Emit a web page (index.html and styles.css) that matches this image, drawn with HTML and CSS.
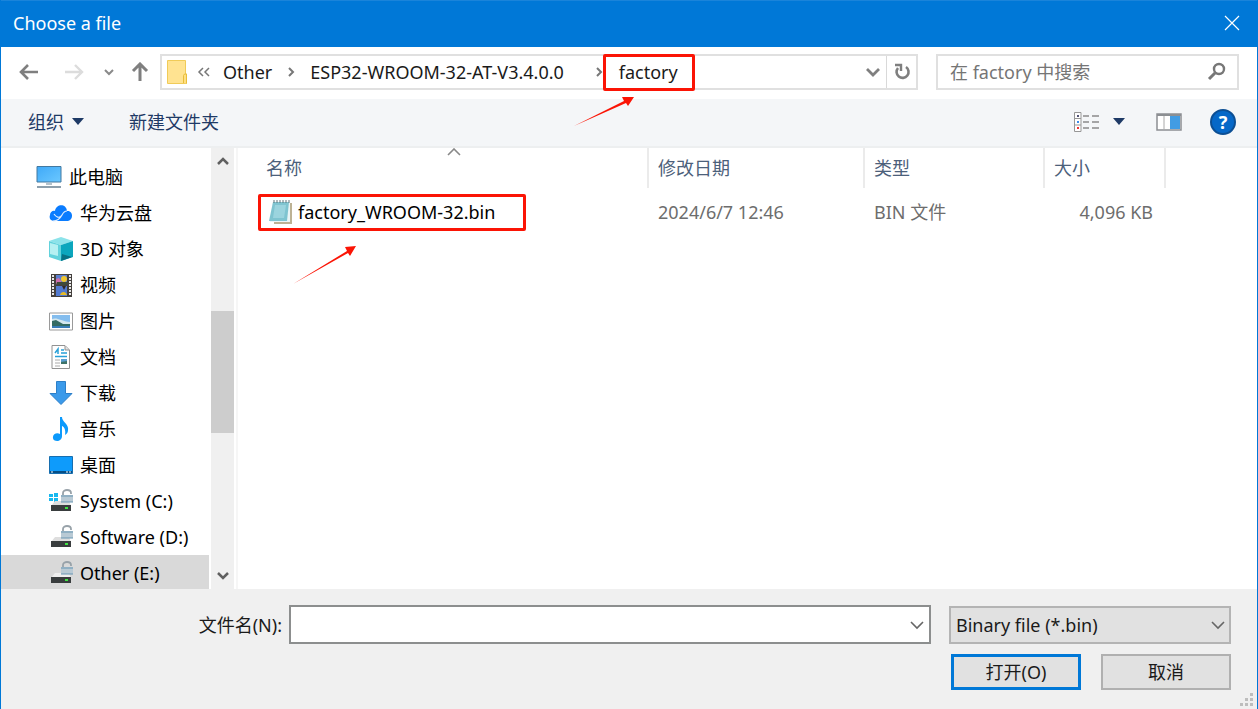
FILE: index.html
```html
<!DOCTYPE html>
<html lang="zh-CN">
<head>
    <meta charset="UTF-8">
    <meta name="viewport" content="width=device-width, initial-scale=1.0">
    <title>Choose a file</title>
    <link rel="stylesheet" href="styles.css">
</head>
<body>
    <div class="dialog">
        <header class="titlebar">
            <h1>Choose a file</h1>
            <button class="close" aria-label="Close">
                <svg width="16" height="16" viewBox="0 0 16 16"><path d="M1 1L15 15M15 1L1 15" stroke="#fff" stroke-width="1.2"/></svg>
            </button>
        </header>

        <nav class="navbar">
            <div class="history">
                <button aria-label="Back"><svg width="20" height="18" viewBox="0 0 20 18"><path d="M9 2L2 9L9 16M2 9H19" fill="none" stroke="#7f7f7f" stroke-width="2.600"/></svg></button>
                <button aria-label="Forward"><svg width="20" height="18" viewBox="0 0 20 18"><path d="M11 2L18 9L11 16M18 9H1" fill="none" stroke="#dcdcdc" stroke-width="2.400"/></svg></button>
                <button class="recent" aria-label="Recent"><svg width="10" height="8" viewBox="0 0 10 8"><path d="M1 2L5 6L9 2" fill="none" stroke="#8a8a8a" stroke-width="2"/></svg></button>
                <button aria-label="Up"><svg width="18" height="20" viewBox="0 0 18 20"><path d="M2 9L9 2L16 9M9 2V19" fill="none" stroke="#7f7f7f" stroke-width="3"/></svg></button>
            </div>
            <div class="address">
                <svg class="folder" width="20" height="26" viewBox="0 0 20 26"><path d="M.5 1.5H18.500V15H19.500V24.500H.5Z" fill="#ffe391" stroke="#f0cb58"/><path d="M16.500 24V16.500L17.500 15H19.500V24.500" fill="#ffdf80" stroke="#e8bd3a"/></svg>
                <svg class="more" width="14" height="12" viewBox="0 0 14 12"><path d="M6 2L2 6L6 10M12 2L8 6L12 10" fill="none" stroke="#777" stroke-width="1.500"/></svg>
                <a href="#">Other</a>
                <svg class="sep" width="8" height="12" viewBox="0 0 8 12"><path d="M2 2L6 6L2 10" fill="none" stroke="#777" stroke-width="2"/></svg>
                <a href="#">ESP32-WROOM-32-AT-V3.4.0.0</a>
                <svg class="sep last" width="8" height="12" viewBox="0 0 8 12"><path d="M2 2L6 6L2 10" fill="none" stroke="#777" stroke-width="2"/></svg>
                <span class="marked crumb">
                    <a href="#">factory</a>
                    <svg class="pointer" width="62" height="32" viewBox="0 0 62 32"><path d="M1 31L51 6L49 2L61 2L55 11L53 8Z" fill="#fb1405"/></svg>
                </span>
                <button class="drop" aria-label="Previous locations"><svg width="14" height="10" viewBox="0 0 14 10"><path d="M1 2L7 8L13 2" fill="none" stroke="#7f7f7f" stroke-width="2.800"/></svg></button>
                <button class="refresh" aria-label="Refresh"><svg width="18" height="20" viewBox="0 0 18 20"><path d="M13 5A6 6 0 1 1 5 6" fill="none" stroke="#7f7f7f" stroke-width="2.600"/><path d="M2 3H8V9" fill="none" stroke="#7f7f7f" stroke-width="2.400"/></svg></button>
            </div>
            <label class="search">
                <input type="search" placeholder="在 factory 中搜索" aria-label="在 factory 中搜索">
                <svg width="20" height="20" viewBox="0 0 20 20"><circle cx="12" cy="7" r="5" fill="none" stroke="#777" stroke-width="2.400"/><path d="M8 11L2 17" stroke="#777" stroke-width="3"/></svg>
            </label>
        </nav>

        <div class="toolbar">
            <button class="organize">组织 <svg width="12" height="7" viewBox="0 0 12 7"><path d="M0 0H12L6 7Z" fill="#1e3a66"/></svg></button>
            <button>新建文件夹</button>
            <div class="views">
                <button class="view" aria-label="View">
                    <svg width="26" height="20" viewBox="0 0 26 20">
                        <path d="M.5 .5H7V19.500H.5ZM.5 6.500H7M.5 13H7" fill="#fff" stroke="#979797"/>
                        <path d="M3 3H5V5H3Z" fill="#557"/><path d="M3 9H5V11H3Z" fill="#3b8bea"/><path d="M3 15H5V17H3Z" fill="#e33"/>
                        <path d="M9 4H15M18 4H25M9 10H15M18 10H25M9 16H15M18 16H25" stroke="#8a8a8a" stroke-width="1.500"/>
                    </svg>
                    <svg width="12" height="7" viewBox="0 0 12 7"><path d="M0 0H12L6 7Z" fill="#1e3a66"/></svg>
                </button>
                <button aria-label="Preview pane">
                    <svg width="26" height="18" viewBox="0 0 26 18"><path d="M1 1H25V17H1Z" fill="#fff" stroke="#8c8f93" stroke-width="1.500"/><path d="M1 2H25" stroke="#8c8f93" stroke-width="2"/><path d="M8 3V16" stroke="#aaa"/><path d="M14 3H24V16H14Z" fill="#429ce3"/></svg>
                </button>
                <button aria-label="Help" class="help">?</button>
            </div>
        </div>

        <main class="content">
            <ul class="tree">
                <li class="root"><a href="#">
                    <svg width="26" height="24" viewBox="0 0 26 24"><defs><linearGradient id="sky" x2="1" y2="1"><stop stop-color="#3fa9f8"/><stop offset="1" stop-color="#6bc8ff"/></linearGradient></defs><path d="M1 1.500H25V17H1Z" fill="url(#sky)" stroke="#4278a0"/><path d="M10 18H16V20H10Z" fill="#b5c2cb"/><path d="M1 22H25" stroke="#8d9fac" stroke-width="2"/></svg>
                    此电脑</a></li>
                <li><a href="#">
                    <svg width="24" height="24" viewBox="0 0 24 24"><path d="M5 20C1 20 0 17 1 14C1 11 4 9 6 10C7 3 17 2 18 10C24 9 25 19 19 20Z" fill="#0a7cff"/><path d="M5 13C7 16 10 18 13 14C14 12 16 10 18 10M4 20C9 20 12 16 13 14" fill="none" stroke="#dcecff" stroke-width="1.200"/></svg>
                    华为云盘</a></li>
                <li><a href="#">
                    <svg width="24" height="24" viewBox="0 0 24 24"><path d="M0 4L12 0L24 4L12 8Z" fill="#8ce3ea"/><path d="M0 4L12 8V24L0 20Z" fill="#62d2dc"/><path d="M24 4L12 8V24L24 20Z" fill="#0ba6bd"/><path d="M1 6L9 8V19L1 17Z" fill="#b6f0f2"/><path d="M12 24L13 17L23 20Z" fill="#087184"/></svg>
                    3D 对象</a></li>
                <li><a href="#">
                    <svg width="24" height="24" viewBox="0 0 24 24"><path d="M2 1H23V24H2Z" fill="#44403d"/><path d="M4 2V23M21 2V23" stroke="#e9e9e9" stroke-width="2" stroke-dasharray="2 1"/><path d="M7 2H18V12H7Z" fill="#5b7fd0"/><path d="M7 13H18V23H7Z" fill="#527ad0"/><path d="M7 6L10 5L12 8V11H7Z" fill="#cf6fae"/><path d="M8 9H18V12H7Z" fill="#3f4a3a"/><circle cx="15" cy="6" r="3" fill="#f1c62e"/><path d="M13 13H17L15 17Z" fill="#332a27"/><path d="M11 22C12 18 17 18 18 22" fill="#e6ba27"/></svg>
                    视频</a></li>
                <li><a href="#">
                    <svg width="24" height="24" viewBox="0 0 24 24"><path d="M.5 4H23.500V21H.5Z" fill="#fff" stroke="#9a9a9a"/><path d="M3 6H21V19H3Z" fill="#84bdee"/><path d="M3 10C8 8 12 12 21 13V19H3Z" fill="#d5e7ee"/><path d="M3 12L7 11L14 15L21 15V17H3Z" fill="#356b62"/><path d="M3 17H21V19H3Z" fill="#397cb6"/></svg>
                    图片</a></li>
                <li><a href="#">
                    <svg width="24" height="24" viewBox="0 0 24 24"><path d="M3 .5H16L20.500 5V23.500H3Z" fill="#fff" stroke="#929292"/><path d="M16 1V5H20" fill="#e3e3e3" stroke="#929292"/><path d="M6 8L9 4V9M12 5H15M12 8H18M6 11.500H18" fill="none" stroke="#28a0d8" stroke-width="1.500"/><path d="M6 15H11M6 18H11M6 21H11" stroke="#aaa"/><path d="M12 14H18V19H12Z" fill="#5b9ed1"/><path d="M12 17L18 16V19H12Z" fill="#3f7469"/></svg>
                    文档</a></li>
                <li><a href="#">
                    <svg width="24" height="24" viewBox="0 0 24 24"><path d="M7.500 .5H16.500V12.500H23L12 23.500L1 12.500H7.500Z" fill="#3b9aea" stroke="#2d7fc8"/></svg>
                    下载</a></li>
                <li><a href="#">
                    <svg width="24" height="24" viewBox="0 0 24 24"><path d="M11 0H13C13 5 20 7 19 13C19 15 18 17 16 18C17 12 15 10 13 9V19C13 26 3 25 4 20C4 17 8 15 11 17Z" fill="#0c9afc"/></svg>
                    音乐</a></li>
                <li><a href="#">
                    <svg width="24" height="24" viewBox="0 0 24 24"><path d="M.5 3.500H23.500V20.500H.5Z" fill="#0e9bfb" stroke="#176eaf"/><path d="M1 19H23" stroke="#064e85" stroke-width="2"/><path d="M2 19H4M17 19H19M20 19H22" stroke="#fff"/></svg>
                    桌面</a></li>
                <li><a href="#">
                    <svg width="24" height="24" viewBox="0 0 24 24"><path d="M0 5H4V8H0ZM5 4H9V8H5ZM0 9H4V12H0ZM5 9H9V13H5Z" fill="#17b8ef"/><path d="M6 12H20L22 17H2Z" fill="#dedede"/><path d="M2 16H22V22H2Z" fill="#393d3e"/><path d="M16 19H19" stroke="#42e445" stroke-width="2"/><path d="M14 7V4C14 0 22 0 22 4V5" fill="none" stroke="#98a2a9" stroke-width="1.800"/><path d="M12 6H24V13H12Z" fill="#b9cad5"/><path d="M12 7H24M12 13H24" stroke="#6996b2"/></svg>
                    System (C:)</a></li>
                <li><a href="#">
                    <svg width="24" height="24" viewBox="0 0 24 24"><path d="M6 12H20L22 17H2Z" fill="#dedede"/><path d="M2 16H22V22H2Z" fill="#393d3e"/><path d="M16 19H19" stroke="#42e445" stroke-width="2"/><path d="M14 7V4C14 0 22 0 22 4V5" fill="none" stroke="#98a2a9" stroke-width="1.800"/><path d="M12 6H24V13H12Z" fill="#b9cad5"/><path d="M12 7H24M12 13H24" stroke="#6996b2"/></svg>
                    Software (D:)</a></li>
                <li class="selected"><a href="#">
                    <svg width="24" height="24" viewBox="0 0 24 24"><path d="M6 12H20L22 17H2Z" fill="#efefef"/><path d="M2 16H22V22H2Z" fill="#393d3e"/><path d="M16 19H19" stroke="#42e445" stroke-width="2"/><path d="M14 7V4C14 0 22 0 22 4V5" fill="none" stroke="#98a2a9" stroke-width="1.800"/><path d="M12 6H24V13H12Z" fill="#b9cad5"/><path d="M12 7H24M12 13H24" stroke="#6996b2"/></svg>
                    Other (E:)</a></li>
            </ul>
            <div class="scrollbar">
                <svg width="12" height="10" viewBox="0 0 12 10"><path d="M1 8L6 3L11 8" fill="none" stroke="#606060" stroke-width="2.500"/></svg>
                <div class="track"><div class="thumb"></div></div>
                <svg width="12" height="10" viewBox="0 0 12 10"><path d="M1 2L6 7L11 2" fill="none" stroke="#606060" stroke-width="2.500"/></svg>
            </div>
            <div class="files">
                <table>
                    <colgroup><col class="c-name"><col class="c-date"><col class="c-type"><col class="c-size"><col></colgroup>
                    <thead>
                        <tr>
                            <th>名称<svg class="sort" width="14" height="8" viewBox="0 0 14 8"><path d="M1 7L7 1L13 7" fill="none" stroke="#888" stroke-width="1.600"/></svg></th>
                            <th>修改日期</th>
                            <th>类型</th>
                            <th>大小</th>
                            <td></td>
                        </tr>
                    </thead>
                    <tbody>
                        <tr>
                            <td class="name">
                                <div class="marked file">
                                    <svg width="24" height="26" viewBox="0 0 24 26"><path d="M7 4H23V25H5V23Z" fill="#bdb294"/><path d="M4 3H21V23H1Z" fill="#eaf5f6"/><path d="M4 3H20L18 22H0Z" fill="#7fc4d0"/><path d="M6 6H17L15 19H4Z" fill="#9bd4de"/><path d="M5 1V4M8 1V4M11 1V4M14 1V4M17 1V4M20 1V4" stroke="#65777c"/></svg>
                                    <span>factory_WROOM-32.bin</span>
                                    <svg class="pointer" width="66" height="40" viewBox="0 0 66 40"><path d="M1 39L55 6L53 2L64 1L58 11L56 8Z" fill="#fb1405"/></svg>
                                </div>
                            </td>
                            <td>2024/6/7 12:46</td>
                            <td>BIN 文件</td>
                            <td class="size">4,096 KB</td>
                            <td></td>
                        </tr>
                    </tbody>
                </table>
            </div>
        </main>

        <footer class="footer">
            <div class="row">
                <label for="filename">文件名(N):</label>
                <div class="combo">
                    <input type="text" id="filename">
                    <svg width="14" height="10" viewBox="0 0 14 10"><path d="M1 2L7 8L13 2" fill="none" stroke="#666" stroke-width="1.600"/></svg>
                </div>
                <div class="filter">
                    <select aria-label="File type">
                        <option>Binary file (*.bin)</option>
                    </select>
                    <svg width="14" height="10" viewBox="0 0 14 10"><path d="M1 2L7 8L13 2" fill="none" stroke="#666" stroke-width="1.600"/></svg>
                </div>
            </div>
            <div class="row actions">
                <button class="open">打开(O)</button>
                <button>取消</button>
            </div>
            <svg class="grip" width="14" height="14" viewBox="0 0 14 14"><path d="M10 0H13V3H10ZM10 5H13V8H10ZM5 5H8V8H5ZM10 10H13V13H10ZM5 10H8V13H5ZM0 10H3V13H0Z" fill="#bdbdbd"/></svg>
        </footer>
    </div>
</body>
</html>
```
FILE: styles.css
```css
*{
    box-sizing: border-box;
}

body{
    margin: 0;
    font-family: "Noto Sans", "Noto Sans CJK SC", sans-serif;
    font-size: 18px;
    line-height: 24px;
    color: #1a1a1a;
}

button, input, select{
    font: inherit;
    color: inherit;
}

button{
    padding: 0;
    border: 0;
    background: none;
}

a{
    color: inherit;
    text-decoration: none;
}

svg{
    display: block;
    flex: none;
}

.dialog{
    display: flex;
    flex-direction: column;
    height: 100vh;
    border: solid #0078d7;
    border-width: 0 1px;
    background-color: #fff;
}

/* title bar */
.titlebar{
    display: flex;
    align-items: center;
    justify-content: space-between;
    height: 47px;
    padding: 0 17px 2px 12px;
    border-top: 1px solid #1a84da;
    background-color: #0078d7;
    color: #fff;
}

.titlebar h1{
    margin: 0;
    font-size: 18px;
    font-weight: normal;
}

/* address and search */
.navbar{
    display: flex;
    align-items: center;
    height: 52px;
    padding: 0 18px 2px;
}

.history{
    display: flex;
    align-items: center;
    width: 141px;
    gap: 25px;
}

.history .recent{
    margin: 0 -8px 0 -5px;
}

.address{
    display: flex;
    align-items: center;
    flex: 1;
    height: 36px;
    padding-left: 5px;
    border: 2px solid #e0e0e0;
    white-space: nowrap;
}

.more{
    margin: 0 12px 0 10px;
}

.sep{
    margin: 0 15px;
}

.sep.last{
    margin: 0 0 0 31px;
}

.marked{
    position: relative;
    display: flex;
    align-items: center;
    height: 37px;
    border: 3px solid #fb1405;
    border-radius: 2px;
}

.pointer{
    position: absolute;
    z-index: 1;
}

.crumb{
    width: 92px;
    padding: 0 13px;
}

.crumb .pointer{
    left: -33px;
    top: 38px;
}

.drop{
    margin: 0 6px 0 auto;
}

.refresh{
    display: flex;
    align-items: center;
    justify-content: center;
    width: 30px;
    height: 32px;
    border-left: 1px solid #d9d9d9;
}

.search{
    display: flex;
    align-items: center;
    width: 303px;
    height: 36px;
    margin-left: 18px;
    padding: 0 10px 0 12px;
    border: 2px solid #e0e0e0;
}

.search input, .combo input{
    flex: 1;
    min-width: 0;
    padding: 0;
    border: 0;
    outline: 0;
    background: none;
}

.search input::placeholder{
    color: #757575;
}

/* toolbar */
.toolbar{
    display: flex;
    align-items: center;
    gap: 45px;
    height: 49px;
    padding: 0 21px 2px 27px;
    border-bottom: 2px solid #edeff0;
    background-color: #f4f6f8;
    color: #1e3a66;
}

.organize{
    display: flex;
    align-items: center;
    gap: 8px;
}

.views{
    display: flex;
    align-items: center;
    gap: 28px;
    margin-left: auto;
}

.view{
    display: flex;
    align-items: center;
    gap: 13px;
    margin-right: 3px;
}

.help{
    width: 26px;
    height: 26px;
    border: 2px solid #0c4f94;
    border-radius: 50%;
    background-color: #0668c8;
    color: #fff;
    font-weight: bold;
    line-height: 20px;
}

/* folder tree and file list */
.content{
    display: flex;
    flex: 1;
    min-height: 0;
}

.tree{
    width: 208px;
    margin: 0;
    padding: 11px 0 0;
    list-style: none;
    overflow: hidden;
    color: #000;
}

.tree a{
    display: flex;
    align-items: center;
    gap: 7px;
    height: 36px;
    padding-left: 48px;
    white-space: nowrap;
}

.tree .root a{
    padding-left: 35px;
}

.tree .selected{
    background-color: #d9d9d9;
}

.scrollbar{
    display: flex;
    flex-direction: column;
    align-items: center;
    width: 23px;
    margin: 0 2px;
    padding: 8px 0;
    background-color: #f0f0f0;
}

.track{
    flex: 1;
    width: 100%;
    padding-top: 145px;
}

.thumb{
    height: 122px;
    background-color: #cdcdcd;
}

.files{
    flex: 1;
    border-left: 2px solid #f6f6f6;
}

table{
    width: 100%;
    table-layout: fixed;
    border-collapse: collapse;
    color: #6d6d6d;
}

.c-name{
    width: 410px;
}

.c-date{
    width: 216px;
}

.c-type{
    width: 180px;
}

.c-size{
    width: 121px;
}

th{
    position: relative;
    height: 40px;
    padding: 0 9px;
    border-right: 2px solid #ebebeb;
    color: #4c607a;
    font-weight: normal;
    text-align: left;
}

th:first-child{
    padding-left: 28px;
}

.sort{
    position: absolute;
    top: 0;
    left: 51%;
}

tbody td{
    height: 48px;
    padding: 0 10px;
}

.name{
    padding: 0 0 0 20px;
    color: #000;
}

.file{
    width: 268px;
    gap: 5px;
    padding-left: 8px;
}

.file .pointer{
    left: 31px;
    top: 48px;
}

tbody .size{
    padding-right: 12px;
    text-align: right;
}

/* file name and buttons */
.footer{
    position: relative;
    display: flex;
    flex-direction: column;
    gap: 10px;
    padding: 16px 26px 19px;
    background-color: #f0f0f0;
}

.row{
    display: flex;
    align-items: center;
}

.row label{
    width: 262px;
    padding-right: 7px;
    text-align: right;
}

.combo{
    display: flex;
    align-items: center;
    flex: 1;
    height: 39px;
    padding: 0 5px;
    border: 2px solid #8c8e8e;
    background-color: #fff;
}

.filter{
    position: relative;
    width: 282px;
    margin-left: 18px;
}

.filter select{
    width: 100%;
    height: 38px;
    padding: 0 5px;
    border: 2px solid #b4b4b4;
    border-radius: 0;
    background-color: #e1e1e1;
    appearance: none;
}

.filter svg{
    position: absolute;
    right: 6px;
    top: 14px;
    pointer-events: none;
}

.actions{
    justify-content: flex-end;
    gap: 20px;
}

.actions button{
    width: 130px;
    height: 36px;
    border: 2px solid #b0b0b0;
    background-color: #e1e1e1;
}

.actions .open{
    border: 3px solid #0078d7;
}

.grip{
    position: absolute;
    right: 3px;
    bottom: 2px;
}
```
